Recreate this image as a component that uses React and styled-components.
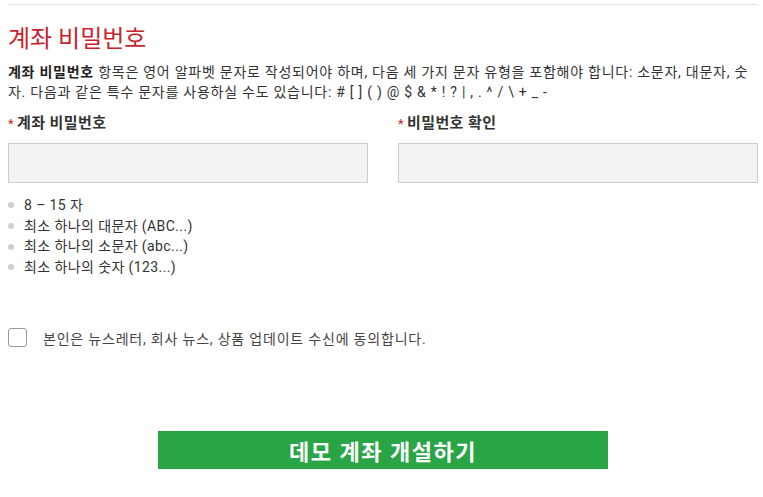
import React from "react";
import styled, { createGlobalStyle } from "styled-components";

const Global = createGlobalStyle`
  html, body { margin: 0; padding: 0; background: #fff; }
  body { font-family: Roboto, "Noto Sans CJK KR", sans-serif; color: #333; }
  * { box-sizing: border-box; }
`;

const Page = styled.div`
  width: 763px;
  padding: 4px 5px 0 8px;
`;

const Rule = styled.div`
  height: 1px;
  margin-right: 1px;
  background: #e2e2e2;
`;

const Title = styled.h2`
  margin: 18px 0 0;
  font-weight: 400;
  font-size: 24px;
  line-height: 32px;
  color: #c8232c;
`;

const Intro = styled.p`
  margin: 7px 0 0;
  font-size: 14px;
  letter-spacing: 0.74px;
  line-height: 20px;
  color: #333;
  word-break: break-all;
  b { font-weight: 700; color: #222; }
`;

const Fields = styled.div`
  display: grid;
  grid-template-columns: 360px 360px;
  column-gap: 30px;
  margin-top: 10px;
`;

const Field = styled.div`
  display: flex;
  flex-direction: column;
`;

const Label = styled.label`
  font-size: 15px;
  font-weight: 700;
  letter-spacing: 0.4px;
  line-height: 20px;
  color: #333;
  margin: 1px 0 9px;
`;

const Star = styled.span`
  color: #c8232c;
  font-weight: 400;
  font-size: 13px;
  margin-right: 3px;
`;

const Input = styled.input`
  height: 40px;
  background: #f3f3f3;
  border: 1px solid #cdcdcd;
  outline: none;
`;

const Rules = styled.ul`
  list-style: none;
  margin: 12px 0 0;
  padding: 0;
`;

const RuleItem = styled.li`
  display: flex;
  align-items: center;
  font-size: 14px;
  letter-spacing: 0.4px;
  line-height: 20.7px;
  color: #333;
  &::before {
    content: "";
    width: 6px;
    height: 6px;
    border-radius: 50%;
    background: #cfcfcf;
    margin: 0 10px 0 0;
  }
`;

const Consent = styled.label`
  display: flex;
  align-items: center;
  gap: 16px;
  margin-top: 50px;
  font-size: 14px;
  letter-spacing: 0.8px;
  color: #444;
`;

const Box = styled.span`
  flex: none;
  width: 19px;
  height: 19px;
  border: 1px solid #9a9a9a;
  border-radius: 3px;
  background: #fff;
`;

const Actions = styled.div`
  display: flex;
  justify-content: center;
  margin-top: 83px;
`;

const Submit = styled.button`
  width: 450px;
  height: 38px;
  border: none;
  background: #2aa545;
  color: #fff;
  font-family: Roboto, "Noto Sans CJK KR", sans-serif;
  font-size: 22px;
  letter-spacing: 1.5px;
  font-weight: 700;
  cursor: pointer;
`;

export default function App() {
  return (
    <Page>
      <Global />
      <Rule />
      <Title>계좌 비밀번호</Title>
      <Intro>
        <b>계좌 비밀번호</b> 항목은 영어 알파벳 문자로 작성되어야 하며, 다음 세 가지 문자 유형을 포함해야 합니다: 소문자, 대문자, 숫자. 다음과 같은 특수 문자를 사용하실 수도 있습니다: # [ ] ( ) @ $ &amp; * ! ? | , . ^ / \ + _ -
      </Intro>
      <Fields>
        <Field>
          <Label><Star>*</Star>계좌 비밀번호</Label>
          <Input type="password" />
        </Field>
        <Field>
          <Label><Star>*</Star>비밀번호 확인</Label>
          <Input type="password" />
        </Field>
      </Fields>
      <Rules>
        <RuleItem>8 – 15 자</RuleItem>
        <RuleItem>최소 하나의 대문자 (ABC...)</RuleItem>
        <RuleItem>최소 하나의 소문자 (abc...)</RuleItem>
        <RuleItem>최소 하나의 숫자 (123...)</RuleItem>
      </Rules>
      <Consent>
        <Box />
        본인은 뉴스레터, 회사 뉴스, 상품 업데이트 수신에 동의합니다.
      </Consent>
      <Actions>
        <Submit>데모 계좌 개설하기</Submit>
      </Actions>
    </Page>
  );
}
